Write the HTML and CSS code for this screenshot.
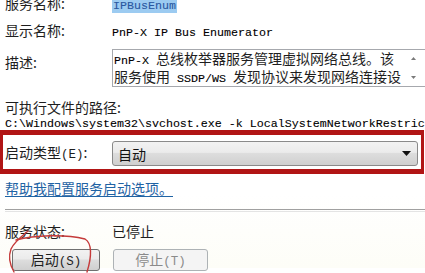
FILE: index.html
```html
<!DOCTYPE html>
<html lang="zh-CN">
<head>
<meta charset="utf-8">
<title>服务属性</title>
<link rel="stylesheet" href="styles.css">
</head>
<body>
<div class="dlg">
  <div class="row r1">
    <span class="lbl">服务名称:</span>
    <span class="val"><span class="en selected">IPBusEnum</span></span>
  </div>
  <div class="row r2">
    <span class="lbl">显示名称:</span>
    <span class="val"><span class="en">PnP-X IP Bus Enumerator</span></span>
  </div>
  <div class="row r3">
    <span class="lbl lbl-desc">描述:</span>
    <div class="textbox">
      <div class="tb-text">
        <div><span class="en">PnP-X </span>总线枚举器服务管理虚拟网络总线。该</div>
        <div>服务使用<span class="en"> SSDP/WS </span>发现协议来发现网络连接设</div>
      </div>
      <div class="tb-scroll">
        <svg width="9" height="30" viewBox="0 0 9 30"><path d="M2 6 L4.5 3 L7 6 Z" fill="#7a7a7a"/><path d="M2 22 L4.5 25 L7 22 Z" fill="#7a7a7a"/></svg>
      </div>
    </div>
  </div>
  <div class="path-lbl">可执行文件的路径:</div>
  <div class="path en">C:\Windows\system32\svchost.exe -k LocalSystemNetworkRestricted</div>
  <div class="startup">
    <span class="lbl">启动类型<span class="en en-k">(E)</span>:</span>
    <div class="combo">
      <span>自动</span>
      <svg class="arrow" width="9" height="5" viewBox="0 0 9 5"><path d="M0 0 H9 L4.5 5 Z" fill="#111"/></svg>
    </div>
  </div>
  <a class="help" href="#">帮助我配置服务启动选项。</a>
  <div class="sep"></div>
  <div class="row status">
    <span class="lbl">服务状态:</span>
    <span class="val">已停止</span>
  </div>
  <div class="buttons">
    <button class="btn btn-start">启动<span class="en en-k">(S)</span></button>
    <button class="btn btn-stop" disabled>停止<span class="en en-k">(T)</span></button>
  </div>
  <svg class="scribble" width="110" height="50" viewBox="0 0 110 50">
    <path d="M28 3 C22 8, 14 14, 11 21 C8 29, 10 37, 14 44" fill="none" stroke="#c53a3a" stroke-width="1.4" stroke-linecap="round"/>
    <path d="M16 12 C35 7, 65 6, 85 11 C92 15, 92 28, 87 44" fill="none" stroke="#c53a3a" stroke-width="1.4" stroke-linecap="round"/>
  </svg>
</div>
</body>
</html>
```

FILE: styles.css
```css
html, body {
  margin: 0;
  padding: 0;
  background: #ffffff;
  overflow: hidden;
}
body {
  width: 425px;
  height: 273px;
  font-family: "Noto Sans CJK SC", "Noto Sans", sans-serif;
  font-size: 14px;
  color: #1e1e1e;
}
.dlg {
  position: relative;
  padding-left: 5px;
  height: 273px;
  background: linear-gradient(#ffffff 0, #ffffff 200px, #fdfdf7 273px);
}
.en {
  font-family: "Liberation Mono", monospace;
  font-size: 11.67px;
  color: #000;
  -webkit-text-stroke: 0.1px #000;
}
.en-k {
  font-size: 12.5px;
  -webkit-text-stroke: 0;
  color: inherit;
}
.row {
  display: flex;
  align-items: flex-start;
  line-height: 16px;
}
.lbl {
  width: 107px;
  flex: none;
  white-space: nowrap;
}
.val {
  white-space: nowrap;
}
.r1 {
  margin-top: -5px;
  height: 16px;
}
.selected {
  background: #9ccbf1;
  color: #2a58a0;
  -webkit-text-stroke: 0.1px #2a58a0;
  padding: 0 1px;
}
.r2 {
  margin-top: 11px;
  height: 16px;
}
.r3 {
  margin-top: 11px;
}
.lbl-desc {
  padding-top: 5px;
}
.textbox {
  display: flex;
  width: 320px;
  height: 38px;
  border: 1px solid #a6a8ad;
  border-right: none;
  box-sizing: border-box;
  background: #fff;
}
.tb-text {
  flex: 1;
  padding: 1px 0 0 1px;
  line-height: 15px;
  white-space: nowrap;
  overflow: hidden;
}
.tb-scroll {
  width: 17px;
  flex: none;
  margin-right: 3px;
  padding-top: 4px;
  display: flex;
  justify-content: center;
}
.path-lbl {
  margin-top: 12px;
  line-height: 16px;
  height: 16px;
}
.path {
  line-height: 14px;
  height: 14px;
  white-space: nowrap;
  margin-top: 2px;
}
.startup {
  display: flex;
  align-items: center;
  margin-left: -5px;
  margin-top: -1px;
  width: 424px;
  box-sizing: border-box;
  border: 3px solid #b11515;
  border-top-width: 5px;
  border-bottom-width: 5px;
  padding: 6px 3px 3px 2px;
  line-height: 16px;
  position: relative;
}
.combo {
  flex: 1;
  height: 25px;
  box-sizing: border-box;
  border: 1px solid #8a8a8a;
  border-radius: 3px;
  background: linear-gradient(#f2f2f2 0%, #ebebeb 45%, #dddddd 50%, #cfcfcf 100%);
  display: flex;
  align-items: center;
  padding: 0 6px 0 5px;
  justify-content: space-between;
  color: #111;
}
.help {
  display: block;
  margin-top: 6px;
  line-height: 16px;
  height: 16px;
  color: #1f63a4;
  text-decoration: underline;
  text-underline-offset: 2px;
  width: max-content;
}
.sep {
  margin-top: 13px;
  height: 1px;
  border-top: 1px solid #a0a0a0;
  border-bottom: 1px solid #e4e4e4;
}
.status {
  margin-top: 11px;
  height: 16px;
}
.buttons {
  display: flex;
  gap: 13px;
  margin-top: 10px;
  padding-left: 7px;
}
.btn {
  height: 22px;
  box-sizing: border-box;
  border-radius: 3px;
  font-family: "Noto Sans CJK SC", sans-serif;
  font-size: 14px;
  line-height: 18px;
  padding: 0;
}
.btn-start {
  width: 88px;
  border: 1px solid #707070;
  background: linear-gradient(#f2f2f2 0%, #ebebeb 45%, #dddddd 50%, #cfcfcf 100%);
  color: #1e1e1e;
}
.btn-stop {
  width: 95px;
  border: 1px solid #adb2b5;
  background: #f4f4f4;
  color: #8a8a8a;
}
.scribble {
  position: absolute;
  left: 0;
  top: 233px;
}
```
